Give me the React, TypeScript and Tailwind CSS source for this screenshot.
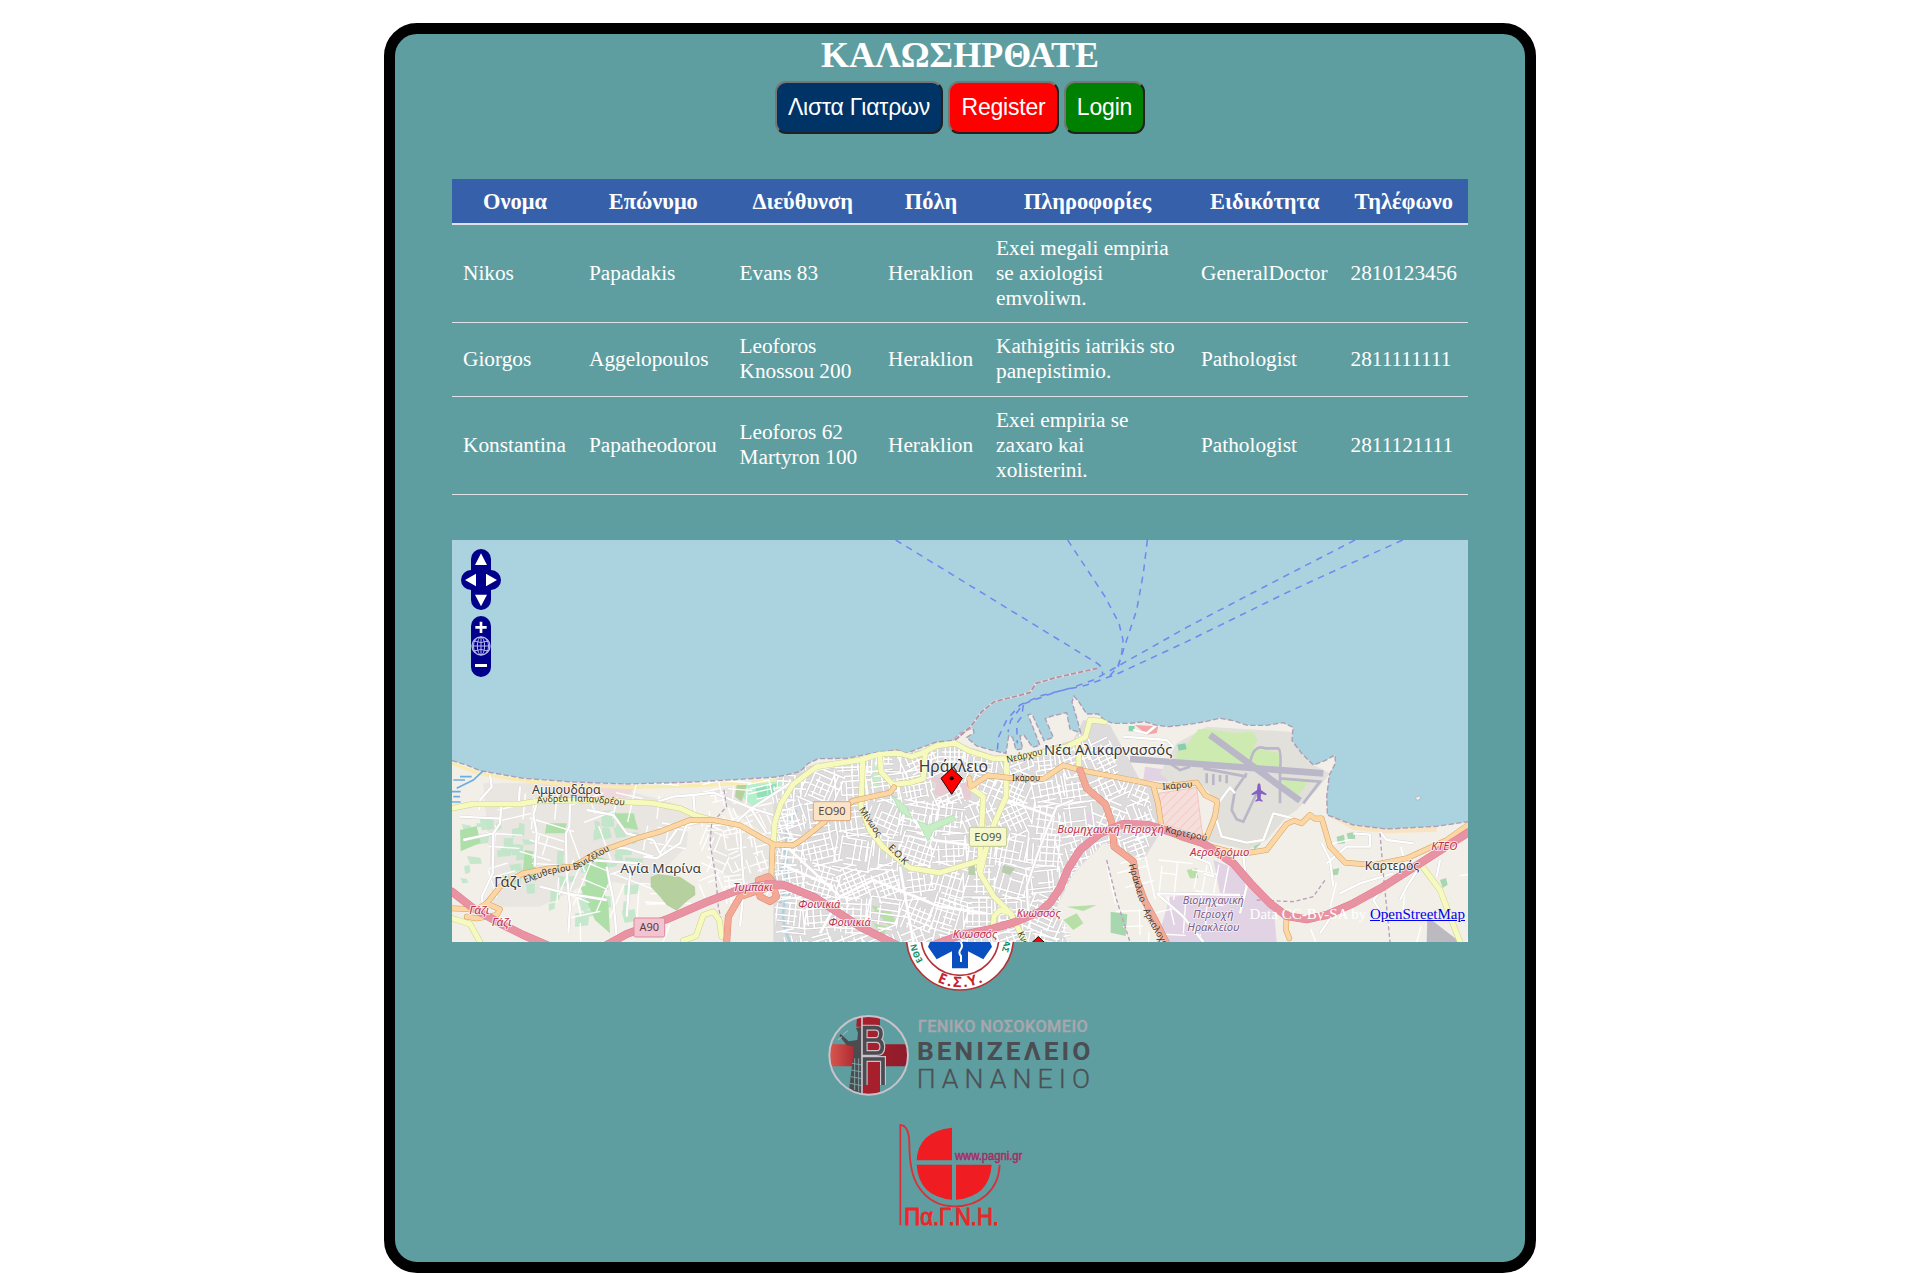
import React from "react";

const SERIF = "font-['Liberation_Serif',serif]";

const columns = [
  { label: "Ονομα", width: 126 },
  { label: "Επώνυμο", width: 150.5 },
  { label: "Διεύθυνση", width: 148.5 },
  { label: "Πόλη", width: 108 },
  { label: "Πληροφορίες", width: 205 },
  { label: "Ειδικότητα", width: 149.5 },
  { label: "Τηλέφωνο", width: 128.5 },
];

const doctors = [
  { h: "h-[98px]", cells: ["Nikos", "Papadakis", "Evans 83", "Heraklion", "Exei megali empiria se axiologisi emvoliwn.", "GeneralDoctor", "2810123456"] },
  { h: "h-[74px]", cells: ["Giorgos", "Aggelopoulos", "Leoforos Knossou 200", "Heraklion", "Kathigitis iatrikis sto panepistimio.", "Pathologist", "2811111111"] },
  { h: "h-[98px]", cells: ["Konstantina", "Papatheodorou", "Leoforos 62 Martyron 100", "Heraklion", "Exei empiria se zaxaro kai xolisterini.", "Pathologist", "2811121111"] },
];

// Deterministic generator for the small street grid.
function makeRandom(seed: number) {
  let s = seed;
  return () => {
    s = (s * 1664525 + 1013904223) % 4294967296;
    return s / 4294967296;
  };
}

function streetGrid(seed: number, x0: number, y0: number, x1: number, y1: number, cell: number, gap: number, keep: number) {
  const rnd = makeRandom(seed);
  let d = "";
  for (let cx = x0; cx < x1; cx += cell) {
    for (let cy = y0; cy < y1; cy += cell) {
      const a = (rnd() - 0.5) * 0.9;
      const ca = Math.cos(a);
      const sa = Math.sin(a);
      const half = cell * 0.56;
      const mx = cx + cell / 2;
      const my = cy + cell / 2;
      for (let o = -half; o <= half; o += gap * (0.7 + rnd() * 0.7)) {
        for (const dir of [0, 1]) {
          if (rnd() > keep) continue;
          const p = -half * (0.3 + rnd() * 0.8);
          const q = half * (0.3 + rnd() * 0.8);
          const [ax, ay, bx, by] = dir ? [o, p, o, q] : [p, o, q, o];
          d += `M${(mx + ax * ca - ay * sa).toFixed(0)} ${(my + ax * sa + ay * ca).toFixed(0)}L${(mx + bx * ca - by * sa).toFixed(0)} ${(my + bx * sa + by * ca).toFixed(0)}`;
        }
      }
    }
  }
  return d;
}

function patches(seed: number, x0: number, y0: number, x1: number, y1: number, n: number, size: number) {
  const rnd = makeRandom(seed);
  let d = "";
  for (let i = 0; i < n; i++) {
    const x = x0 + rnd() * (x1 - x0);
    const y = y0 + rnd() * (y1 - y0);
    const w = size * (0.4 + rnd());
    const h = size * (0.3 + rnd() * 0.8);
    d += `M${x.toFixed(0)} ${y.toFixed(0)}l${w.toFixed(0)} ${(rnd() * 10 - 5).toFixed(0)}l${(rnd() * 12 - 6).toFixed(0)} ${h.toFixed(0)}l${(-w * 0.9).toFixed(0)} ${(rnd() * 8).toFixed(0)}z`;
  }
  return d;
}

const COAST =
  "M36 182L80 195L120 212L250 235L400 246L560 252L740 247L900 238L1010 231L1080 215L1105 190L1135 176L1220 175L1320 155L1370 150L1400 160L1450 140L1490 126L1540 121L1560 100L1598 84L1602 98L1580 112L1610 138L1660 152L1698 160L1706 108L1718 112L1728 150L1748 146L1740 108L1752 106L1778 142L1800 136L1764 44L1776 42L1812 122L1840 112L1816 56L1836 48L1880 38L1890 88L1922 98L1912 60L1896 6L1902 -12L1918 8L1940 42L1975 42L1992 60L2019 70L2070 70L2114 65L2150 76L2185 80L2225 76L2268 70L2300 64L2339 55L2380 62L2422 76L2480 76L2529 68L2559 82L2556 122L2585 160L2620 195L2655 182L2685 165L2686 190L2668 225L2660 290L2662 345L2740 375L2840 387L2990 379L3084 365";

const YELLOW = [
  "M36 325L100 312L240 312L300 302L450 300L640 310L720 325L770 348L810 358",
  "M1000 430L1004 370L1022 312L1060 252L1130 200L1260 180L1320 162L1380 160L1415 170L1445 160L1490 137L1545 130L1585 152L1660 176L1720 176L1810 158L1880 140L1936 112L1950 60L1995 65",
  "M1915 130L1917 208",
  "M1268 186L1263 320L1290 392L1330 442L1410 504L1500 518L1620 482",
  "M1700 178L1698 290L1662 372L1640 440L1620 520L1662 590L1712 640L1742 700L1760 740",
  "M1590 262L1630 290L1624 400L1618 510",
  "M1320 172L1323 215L1358 253L1410 248L1450 236L1456 160",
  "M1712 640L1680 630L1662 650L1658 690",
  "M2940 490L3000 570L3060 726",
  "M36 655L90 672L120 726",
  "M730 722L768 708L790 645L820 635L838 660L845 710",
];

const ORANGE = [
  "M36 625L110 628L140 610L180 560L250 520L330 505L400 500L470 458L590 415L660 395L750 360L820 360L900 376L950 405L1000 433L1060 436L1090 416L1160 360L1240 302L1350 278L1362 262",
  "M140 610L180 628L170 645L110 655L80 650",
  "M998 433L994 530",
  "M1588 235L1592 260L1645 226L1720 235L1810 237L1870 196L1920 210L2000 226L2100 245L2170 260L2270 248L2296 286L2332 304L2325 350L2300 412",
  "M2140 258L2154 310L2165 385L2230 415L2320 442L2380 458L2430 458L2480 450L2540 372L2562 362L2585 370L2610 345L2625 356L2645 355L2670 440L2715 488L2800 495L2900 475L3020 420L3084 375",
  "M2540 640L2538 690L2548 715",
];

const SALMON = [
  "M1920 210L1940 265L1996 312L2016 370L2022 440L2080 484L2090 540L2115 605L2145 660L2185 740",
  "M860 726L865 650L900 590L960 570L1000 560L1010 590L990 605L960 590L955 540L985 530L1010 560",
];

const MOTORWAY = [
  "M36 575L100 625L180 670L250 705L320 735",
  "M500 735L560 702L680 658L800 606L900 568L980 553L1030 554L1120 590L1260 680L1370 735",
  "M1480 735L1560 706L1660 685L1720 668L1800 635L1830 608L1860 565L1885 505L1920 450L1980 400L2050 372L2120 374L2190 395L2290 430L2380 490L2430 548L2490 610L2540 648L2600 658L2660 645L2740 610L2830 560L2940 490L3010 445L3084 398",
];

const MINOR =
  "M150 225L155 260L120 300L118 330M184 312L180 370L160 400L158 520L125 590L130 620M290 310L280 345L290 400L284 500M390 310L388 380L378 400L380 520L390 620L385 700M440 330L520 345L560 400L640 420M650 306L700 290L760 285L820 278L900 310L935 325L1000 345M760 285L765 345M890 365L935 325L1050 250M610 470L650 475L720 430L740 375L780 365M900 376L905 470L912 560L900 680M640 420L660 460L710 390M240 260L236 310M500 500L520 600L530 710M570 520L560 650M450 480L600 490M300 560L380 580L500 600M70 420L160 400M60 350L180 356M500 440L560 445L640 470M935 330L980 400M1900 300L1850 320L1820 390L1790 470L1760 560L1765 640M2080 90L2120 100L2150 75M2050 110L2180 120L2200 140M2385 280L2370 262L2320 330L2345 410L2420 428L2470 420L2500 340L2560 355M2410 465L2420 560L2400 640M2645 430L2670 480L2680 560M2660 490L2720 440L2790 440M2740 400L2790 404L2790 440M2820 395L2840 420L2920 430M2700 580L2760 550L2860 520M2940 500L2900 560L2880 600M3000 480L2990 530M2260 470L2310 490L2320 530L2290 520M2150 580L2230 650L2290 726M2150 580L2400 585M2640 700L2680 640M2930 505L2850 540L2800 600L2850 680";

const FERRY = [
  "M1367 -480L1972 -110L1986 -98L1988 -75",
  "M1883 -480L1995 -310L2037 -230L2049 -180L2045 -140L2035 -100L2008 -72",
  "M2122 -480L2110 -380L2090 -270L2060 -180L2042 -125L2033 -100",
  "M2745 -480L2493 -350L2244 -220L2031 -100L1960 -60L1890 -35L1800 -12L1740 15L1700 60L1676 110L1672 150",
  "M2888 -480L2700 -395L2540 -322L2240 -175L2031 -78L1940 -45L1850 -25L1750 12L1712 62L1704 96",
  "M1750 15L1745 50L1730 70L1732 130",
];

const MapLabels = () => (
  <g className="font-['Noto_Sans',sans-serif]" fill="#3d3b3b" stroke="#ffffff" strokeOpacity="0.7" strokeWidth="6" strokeLinejoin="round" paintOrder="stroke">
    <text x="276" y="282" fontSize="39" textLength="206" lengthAdjust="spacingAndGlyphs">Αμμουδάρα</text>
    <text x="541" y="518" fontSize="39" textLength="242" lengthAdjust="spacingAndGlyphs">Αγία Μαρίνα</text>
    <text x="163" y="562" fontSize="43" textLength="80" lengthAdjust="spacingAndGlyphs">Γάζι</text>
    <text x="1436" y="217" fontSize="46" textLength="208" lengthAdjust="spacingAndGlyphs">Ηράκλειο</text>
    <text x="1812" y="166" fontSize="43" textLength="385" lengthAdjust="spacingAndGlyphs">Νέα Αλικαρνασσός</text>
    <text x="2774" y="510" fontSize="36" textLength="164" lengthAdjust="spacingAndGlyphs">Καρτερός</text>
    <g fontSize="28" strokeWidth="3" strokeOpacity="0.3" fill="#3b3428">
      <path id="andrea" d="M292 310Q420 296 560 318" fill="none" stroke="none" />
      <text><textPath href="#andrea" textLength="262" lengthAdjust="spacingAndGlyphs">Ανδρέα Παπανδρέου</textPath></text>
      <path id="eleftheriou" d="M255 550L330 522L410 508L512 450L530 440" fill="none" stroke="none" />
      <text><textPath href="#eleftheriou" textLength="276" lengthAdjust="spacingAndGlyphs">Ελευθερίου Βενιζέλου</textPath></text>
      <text transform="translate(1702 188) rotate(-13)" textLength="110" lengthAdjust="spacingAndGlyphs">Νεάρχου</text>
      <text x="1716" y="243" textLength="84" lengthAdjust="spacingAndGlyphs">Ικάρου</text>
      <text transform="translate(2168 270) rotate(-5)" textLength="90" lengthAdjust="spacingAndGlyphs">Ικάρου</text>
      <text transform="translate(2174 397) rotate(12)" textLength="128" lengthAdjust="spacingAndGlyphs">Καρτερού</text>
      <text transform="translate(1256 329) rotate(56)" textLength="100" lengthAdjust="spacingAndGlyphs">Μίνωος</text>
      <text transform="translate(1343 444) rotate(46)" textLength="72" lengthAdjust="spacingAndGlyphs">Ε.Ο.Κ</text>
      <text transform="translate(1732 700) rotate(66)" textLength="94" lengthAdjust="spacingAndGlyphs">Κνωσού</text>
      <path id="arkalochori" d="M2066 494L2094 590L2120 655L2170 740L2200 790" fill="none" stroke="none" />
      <text><textPath href="#arkalochori" textLength="300" lengthAdjust="spacingAndGlyphs">Ηράκλειο - Αρκαλοχώρι</textPath></text>
    </g>
    <g fontSize="32" fontStyle="italic" fill="#c0304e" strokeWidth="6">
      <text x="88" y="641" textLength="60" lengthAdjust="spacingAndGlyphs">Γάζι</text>
      <text x="155" y="677" textLength="60" lengthAdjust="spacingAndGlyphs">Γάζι</text>
      <text x="880" y="574" textLength="118" lengthAdjust="spacingAndGlyphs">Τυμπάκι</text>
      <text x="1074" y="624" textLength="127" lengthAdjust="spacingAndGlyphs">Φοινικιά</text>
      <text x="1165" y="679" textLength="127" lengthAdjust="spacingAndGlyphs">Φοινικιά</text>
      <text x="1730" y="651" textLength="132" lengthAdjust="spacingAndGlyphs">Κνωσσός</text>
      <text x="1538" y="715" textLength="134" lengthAdjust="spacingAndGlyphs">Κνωσσός</text>
      <text x="1852" y="398" textLength="320" lengthAdjust="spacingAndGlyphs">Βιομηχανική Περιοχή</text>
      <text x="2250" y="467" textLength="178" lengthAdjust="spacingAndGlyphs">Αεροδρόμιο</text>
      <text x="2974" y="450" textLength="78" lengthAdjust="spacingAndGlyphs">ΚΤΕΟ</text>
    </g>
    <g fontSize="32" fontStyle="italic" fill="#79608a" strokeWidth="5" textAnchor="middle">
      <text x="2320" y="612" textLength="184" lengthAdjust="spacingAndGlyphs">Βιομηχανική</text>
      <text x="2320" y="653" textLength="122" lengthAdjust="spacingAndGlyphs">Περιοχή</text>
      <text x="2320" y="693" textLength="156" lengthAdjust="spacingAndGlyphs">Ηρακλείου</text>
    </g>
  </g>
);

const Shield = ({ x, y, w, label, fill, stroke, color }: { x: number; y: number; w: number; label: string; fill: string; stroke: string; color: string }) => (
  <g className="font-['Noto_Sans',sans-serif]">
    <rect x={x} y={y} width={w} height="57" rx="5" fill={fill} stroke={stroke} strokeWidth="3" />
    <text x={x + w / 2} y={y + 40} fontSize="33" textAnchor="middle" fill={color}>{label}</text>
  </g>
);

const Marker = ({ x, y }: { x: number; y: number }) => (
  <g transform={`translate(${x} ${y})`}>
    <path d="M0 -78L32 -48L0 0L-32 -48Z" fill="#ff0000" stroke="#200000" strokeWidth="3" />
    <circle cx="0" cy="-48" r="6" fill="#000" />
  </g>
);

const PanZoom = () => (
  <g>
    <g fill="#00008b">
      <rect x="93" y="-453" width="60" height="183" rx="30" />
      <rect x="63" y="-390" width="120" height="60" rx="30" />
      <rect x="93" y="-252" width="60" height="183" rx="30" />
    </g>
    <path fill="#fff" d="M123 -440L141 -405H105ZM123 -281L141 -316H105ZM75 -360L108 -379V-341ZM171 -360L138 -379V-341ZM119 -235h8v13h13v8h-13v13h-8v-13h-13v-8h13zM105 -108h36v9h-36z" />
    <g fill="none" stroke="#b8b8ef" strokeWidth="3">
      <circle cx="123" cy="-162" r="27" strokeWidth="4" />
      <ellipse cx="123" cy="-162" rx="11" ry="27" />
      <path d="M123 -189V-135M97 -162H149M101 -177Q123 -168 145 -177M101 -147Q123 -156 145 -147M108 -183Q92 -162 108 -141M138 -183Q154 -162 138 -141" />
    </g>
  </g>
);

const Roads = ({ paths, casing, color, width }: { paths: string[]; casing: string; color: string; width: number }) => (
  <g fill="none" strokeLinejoin="round" strokeLinecap="round">
    {paths.map((d) => <path key={d} d={d} stroke={casing} strokeWidth={width + 3} />)}
    {paths.map((d) => <path key={d} d={d} stroke={color} strokeWidth={width} />)}
  </g>
);

const CityMap = () => (
  <svg className="block h-full w-full" viewBox="36 -480 3048 1206" role="img" aria-label="Ηράκλειο">
    <defs>
      <clipPath id="land"><path d={COAST + "V726H36Z"} /></clipPath>
      <clipPath id="city"><path d="M1010 240L1130 190L1260 180L1450 150L1540 125L1660 165L1720 170L1900 130L1930 70L2000 75L2040 230L2120 262L2150 380L2110 480L2060 460L1990 430L1900 520L1850 620L1900 726H1010L1000 560L1010 440Z" /></clipPath>
      <pattern id="hatch" width="20" height="20" patternUnits="userSpaceOnUse" patternTransform="rotate(45)">
        <rect width="20" height="20" fill="#f6dedb" />
        <path d="M0 0V20" stroke="#f1b9b5" strokeWidth="3" />
      </pattern>
    </defs>
    <rect x="36" y="-480" width="3048" height="1206" fill="#aad3df" />
    <path d={COAST + "V726H36Z"} fill="#f2efe9" />
    <g clipPath="url(#land)">
      <path fill="#e9e6e2" d="M130 250H480L700 310L880 380L1000 440V560L880 540L800 480L640 560L460 540L300 620H160ZM820 270L1010 240V430L900 350Z" />
      <path fill="#f2efe9" d="M36 470L150 440V600H36ZM745 380L800 370L830 520L770 600L700 640L620 560L740 440Z" />
      <path fill="#f0d9dc" d="M310 245L590 256L560 295L440 290L320 285Z" />
      <path fill="#dddbdb" d="M1000 240L1130 190L1260 175L1450 150L1540 125L1660 165L1720 170L1900 120L1930 60L2010 75L2100 240L2150 270L2160 400L2110 480L2060 460L1990 430L1900 520L1850 620L1880 726H1000Z" />
      <path fill="#b5e6c2" opacity=".75" d={patches(9, 60, 350, 260, 560, 22, 34) + patches(13, 300, 440, 560, 640, 26, 40) + patches(5, 420, 330, 700, 400, 12, 34)} />
      <path fill="#aedfa9" d="M60 390l50-12 12 50-60 26zM470 470l30 8 5 90-40 10zM420 560l60-10 25 60 5 90-45-40zM440 490l40 20-10 70-35-10zM255 450l30 5 3 90-40-30zM320 370l60 0-5 30-60 0zM520 340l60 0 15 50-50-8z" />
      <path fill="#b5f0cc" d="M920 250L1035 238L1000 290L940 320L905 290Z" />
      <path fill="#92dfb8" d="M945 260l35-6 2 35-28 8zM985 255l30-5-10 30-20 5z" />
      <path fill="#b6d0a0" d="M890 255L920 255L905 305L885 290Z" />
      <path fill="#c8eec5" d="M1300 180L1325 230L1310 270L1290 250ZM1065 235L1095 230L1095 252L1070 255Z" />
      <path fill="#b7dfa7" d="M1290 615l60 15 15 30-15 20zM1300 670l40 10-10 35zM1910 640l-40 20 30 30 30-20zM1880 620l90-5-40 18zM2240 510l30-5 5 30-25 0z" />
      <path fill="#a7d7af" d="M2012 635l50 8-5 65-45-10zM2690 410l22-6 3 26-22 2zM2720 400l24-4 2 20-22 2zM2670 510l28-6-4 20-22 2zM3000 540l18-6 5 20-15 10zM2438 435l28-30-4 26-18 18z" />
      <path fill="#e1d3e3" d="M2115 200L2185 210V245L2110 240ZM2320 480L2420 520L2500 610L2510 726H2150L2190 590L2340 580ZM1940 340l20-5 8 30-30 10z" />
      <path fill="#fbe0b0" opacity=".7" d="M2660 345L2740 375L2840 387L2990 379L2990 395L2840 400L2740 390Z" />
      <path fill="#e2e0da" d="M2300 80L2559 96L2620 195L2670 220L2630 270L2570 330L2540 350L2480 420L2420 450L2290 420L2330 300L2280 250L2190 245L2160 220L2210 130Z" />
      <path fill="#cdebb0" d="M2295 86L2380 98L2440 96L2452 120L2440 145L2475 150L2520 160L2518 205L2440 200L2210 180L2210 155L2245 130L2275 88ZM2520 235L2610 240L2575 285L2545 270Z" />
      <g stroke="#bab7c9" fill="none">
        <path strokeWidth="20" d="M2070 177L2650 220" />
        <path strokeWidth="20" d="M2310 105L2580 302" />
        <path strokeWidth="8" d="M2430 190Q2440 130 2475 145H2515Q2525 150 2520 220V310M2190 190L2220 210L2250 200M2300 220L2300 250M2320 222V255M2340 225V245M2360 225V250M2420 220L2385 270L2375 330L2390 358L2410 365L2450 280M2290 205L2420 230M2520 235L2640 245L2590 310" />
      </g>
      <path fill="url(#hatch)" stroke="#efb6b0" strokeWidth="2" d="M2156 280L2270 262L2285 385L2290 410L2170 372Z" />
      <path fill="#a6a3ae" opacity=".7" d="M2962 650L3060 726H2960Z" />
      <path fill="#f6a4a8" d="M2085 75l70 4-5 20-30 5z" />
      <path fill="#88cfb0" d="M2066 78l18 0 0 16-18 0zM2212 134l24-4 4 18-24 4z" />
      <path d="M36 190L120 222L250 242L400 256L560 262L740 258L900 250L1010 240" stroke="#f9ecb0" strokeWidth="10" fill="none" />
      <path d="M990 560Q1050 480 1040 430T1070 330M1070 550Q1000 620 1050 726M1030 440Q1060 520 1020 610" fill="none" stroke="#aad3df" strokeWidth="8" />
      <path d="M130 212L100 240L50 265M40 240H75M60 230H95M36 275H62M40 290H60M36 306H62" fill="none" stroke="#6daee0" strokeWidth="5" />
      <g clipPath="url(#city)" fill="none">
        <path d={streetGrid(41, 1000, 120, 2200, 726, 96, 17, 0.92)} stroke="#c4c1c1" strokeWidth="7" />
        <path d={streetGrid(41, 1000, 120, 2200, 726, 96, 17, 0.92)} stroke="#ffffff" strokeWidth="5.2" />
      </g>
      <g fill="none" stroke="#ffffff">
        <path d={streetGrid(17, 140, 260, 700, 560, 120, 34, 0.3)} strokeWidth="4" />
        <path d={streetGrid(23, 790, 250, 1010, 540, 70, 18, 0.55)} strokeWidth="4" />
        <path d={streetGrid(77, 380, 560, 700, 726, 110, 40, 0.25)} strokeWidth="4" />
        <path d={streetGrid(31, 2020, 490, 2330, 726, 110, 36, 0.4)} strokeWidth="4" />
        <path d={streetGrid(37, 2640, 400, 3060, 700, 130, 46, 0.1)} strokeWidth="4" />
        <path d={MINOR} stroke="#d4cfcf" strokeWidth="9" strokeLinejoin="round" />
        <path d={MINOR} strokeWidth="7" strokeLinejoin="round" />
        <path d="M1040 440L1200 590L1300 540L1500 620L1640 640M1200 590L1140 700M1040 500L1180 560M1380 500L1420 726M1360 300L1480 420L1620 440M1700 300L1840 350" strokeWidth="8" />
      </g>
      <path fill="#b6d0a0" d="M632 530L655 522L720 530L765 560L766 585L745 600L710 632L680 615L660 590L632 560Z" />
      <path fill="#c8eec5" stroke="#a5dcae" strokeWidth="2" d="M1355 285L1400 320L1418 358L1380 335ZM1432 362L1465 375L1540 345L1548 360L1480 392L1464 424Z" />
      <path fill="#b9ccab" d="M1585 490h20v35h-20zM1690 495l35 10-15 20-25-8z" />
      <path fill="#e8ccd4" d="M1465 235L1530 225L1545 270L1500 290L1480 280L1490 250ZM1560 250l30-5 3 50-20 5z" />
      <path d="M852 270L860 320L815 370L810 430L826 520L835 620L850 690M2000 480L2030 600L2070 726M2820 400L2830 520L2850 726M2450 600L2560 605L2620 590L2655 540" fill="none" stroke="#b79fbd" strokeWidth="4" strokeDasharray="12 8" />
    </g>
    <path d={COAST} fill="none" stroke="#a58ba8" strokeWidth="4" strokeDasharray="16 7" opacity=".8" />
    <path d="M1545 120L1592 80L1625 35L1663 5L1770 -22L1788 -50L1850 -68L1972 -95" fill="none" stroke="#e6dbe0" strokeWidth="7" />
    <path d="M1545 120L1592 80L1625 35L1663 5L1770 -22L1788 -50L1850 -68L1972 -95" fill="none" stroke="#b08f9f" strokeWidth="5" strokeDasharray="16 6" />
    <path d="M2925 295l12-8 6 8-10 6z" fill="#f2efe9" stroke="#a7a7c0" strokeWidth="2" />
    <g fill="none" stroke="#7387ef" strokeWidth="4.6" strokeDasharray="20 17">
      {FERRY.map((d) => <path key={d} d={d} />)}
    </g>
    <g clipPath="url(#land)">
      <Roads paths={YELLOW} casing="#cfd189" color="#f7fabf" width={15} />
      <Roads paths={ORANGE} casing="#d2a25a" color="#fcd6a4" width={14} />
      <Roads paths={SALMON} casing="#d98873" color="#f4a996" width={18} />
      <Roads paths={MOTORWAY} casing="#e07c98" color="#e892a2" width={21} />
    </g>
    <path d="M2457 250q4 0 5 10l1 10 16 11v5l-16-5-1 15 6 6v3l-11-3-11 3v-3l6-6-1-15-16 5v-5l16-11 1-10q1-10 5-10z" fill="#8461c4" />
    <MapLabels />
    <Shield x={582} y={654} w={92} label="A90" fill="#f3c4cf" stroke="#dc8ba0" color="#5c3a42" />
    <Shield x={1120} y={305} w={112} label="EO90" fill="#fbe3c8" stroke="#d9a77a" color="#5b4a38" />
    <Shield x={1588} y={382} w={112} label="EO99" fill="#f5f7cd" stroke="#bfc98a" color="#52563b" />
    <Marker x={1535} y={283} />
    <Marker x={1795} y={788} />
    <PanZoom />
  </svg>
);

const EsyLogo = () => (
  <svg className="block h-[55px] w-[110px]" viewBox="375 36 330 165" aria-label="Ε.Σ.Υ.">
    <defs>
      <path id="esyBottom" d="M413 103A152 152 0 0 0 667 103" />
      <path id="esyLeft" d="M429 92A133 133 0 0 1 407 19" />
      <path id="esyRight" d="M672 6A133 133 0 0 1 654 88" />
    </defs>
    <circle cx="540" cy="19" r="161" fill="#fff" stroke="#b5343a" strokeWidth="5" />
    <circle cx="540" cy="19" r="117" fill="#fff" stroke="#b5343a" strokeWidth="5" />
    <path fill="#0a4fc0" d="M444 50L450 36H630L636 50L610 88L564 64V115H516V64L470 88Z" />
    <path d="M542 36Q550 48 542 58T543 78V96" fill="none" stroke="#fff" strokeWidth="6" />
    <g className="font-['Noto_Sans',sans-serif]" fontWeight="bold">
      <text fontSize="43" fill="#c5222b" textAnchor="middle"><textPath href="#esyBottom" startOffset="50%" textLength="142">Ε.Σ.Υ.</textPath></text>
      <g fontSize="26" fill="#0f8f6c">
        <text><textPath href="#esyLeft">ΕΘΝ</textPath></text>
        <text><textPath href="#esyRight">ΕΙΑΣ</textPath></text>
      </g>
    </g>
  </svg>
);

const VenizeleioLogo = () => (
  <svg className="block h-[113px] w-[320px]" viewBox="60 201 960 339" aria-label="Βενιζέλειο Πανάνειο">
    <defs>
      <linearGradient id="crossRed" x1="0" x2="1">
        <stop offset="0" stopColor="#d8584f" />
        <stop offset=".4" stopColor="#a51f2c" />
        <stop offset="1" stopColor="#8e1c2b" />
      </linearGradient>
      <clipPath id="disc"><circle cx="266" cy="376" r="118" /></clipPath>
    </defs>
    <g clipPath="url(#disc)">
      <path fill="url(#crossRed)" d="M148 343H384V409H148Z" />
      <path fill="#a51f2c" d="M246 258H300V495H246Z" />
      <path fill="#a51f2c" d="M231 262H246V290H229Z" />
      <path fill="#4b4b50" d="M246 290L228 294L234 308L232 330L206 334L182 312L178 317L200 346L222 350L220 376L207 480L246 492Z" />
      <path d="M216 400l30 5M214 420l32 6M212 440l34 6M210 460l36 7M224 385v95M236 385v100" stroke="#7da5a5" strokeWidth="3" />
      <path d="M188 314l16-12M174 330l12-10" stroke="#b9b4bd" strokeWidth="3" />
      <path d="M246 258V495" stroke="#c9c2ca" strokeWidth="5" />
    </g>
    <circle cx="266" cy="376" r="118" fill="none" stroke="#c9c2ca" strokeWidth="6" />
    <g fill="none" strokeLinejoin="miter">
      <path d="M254 293V369H290Q307 369 307 350Q307 333 292 330Q303 325 303 311Q303 293 286 293ZM254 330H292M254 465V387H309V465" stroke="#c9c2ca" strokeWidth="18" />
      <path d="M254 293V369H290Q307 369 307 350Q307 333 292 330Q303 325 303 311Q303 293 286 293ZM254 330H292M254 465V387H309V465" stroke="#4b4b50" strokeWidth="11" />
    </g>
    <g className="font-['Roboto',sans-serif]">
      <text x="413" y="305" fontSize="49" fontWeight="500" fill="#a9a7ae" stroke="#a9a7ae" strokeWidth="1" textLength="510">ΓΕΝΙΚΟ ΝΟΣΟΚΟΜΕΙΟ</text>
      <text x="411" y="391" fontSize="79" fontWeight="700" fill="#4b4d52" textLength="520">ΒΕΝΙΖΕΛΕΙΟ</text>
      <text x="410" y="475" fontSize="80" fontWeight="300" fill="#4b5155" stroke="#4b5155" strokeWidth="1" textLength="520">ΠΑΝΑΝΕΙΟ</text>
    </g>
  </svg>
);

const PagniLogo = () => (
  <svg className="block h-[120px] w-[140px]" viewBox="330 540 420 360" aria-label="Πα.Γ.Ν.Η.">
    <path fill="#ef1c22" d="M516 593V691H410Q414 604 516 593ZM410 704H516V809Q416 800 410 704ZM528 704H635Q629 800 528 809Z" />
    <path d="M361 886V585Q387 586 388 640C388 700 396 740 414 768C438 806 476 829 524 829C600 829 656 780 659 704" fill="none" stroke="#dc3038" strokeWidth="5.5" />
    <g className="font-['Liberation_Sans',sans-serif]">
      <text x="525" y="689" fontSize="38" fill="#a82c64" stroke="#a82c64" strokeWidth="1.5" textLength="202" lengthAdjust="spacingAndGlyphs">www.pagni.gr</text>
      <text x="373" y="885" fontSize="70" fill="#ee2429" stroke="#ee2429" strokeWidth="3" textLength="284" lengthAdjust="spacingAndGlyphs">Πα.Γ.Ν.Η.</text>
    </g>
  </svg>
);

const buttonBase =
  "h-[53px] rounded-[11px] border-2 border-t-[#767676] border-l-[#767676] border-r-[#212121] border-b-[#212121] text-center text-[23px] leading-none tracking-[-0.2px] text-white font-['Liberation_Sans',sans-serif]";

export default function App() {
  return (
    <div className={`min-h-[1273px] bg-white pt-[23px] text-white ${SERIF}`}>
      <main className="mx-auto flex h-[1250px] w-[1152px] flex-col items-center rounded-[33px] border-[11px] border-black bg-[#5f9ea0]">
        <h1 className="h-[43px] text-[36px] leading-[42px] font-bold">ΚΑΛΩΣΗΡΘΑΤΕ</h1>
        <div className="mt-1 flex gap-[5px]">
          <button className={`${buttonBase} w-[168px] bg-[#003366]`}>Λιστα Γιατρων</button>
          <button className={`${buttonBase} w-[111px] bg-[#ff0000]`}>Register</button>
          <button className={`${buttonBase} w-[81px] bg-[#008000]`}>Login</button>
        </div>

        <table className="mt-[45px] w-[1016px] table-fixed border-collapse text-[21.3px] leading-[25px]">
          <colgroup>
            {columns.map((c) => <col key={c.label} style={{ width: c.width }} />)}
          </colgroup>
          <thead>
            <tr className="h-[45px] border-b-2 border-[#dee2e6] bg-[#3661aa] text-[22.4px]">
              {columns.map((c) => <th key={c.label} className="p-0 text-center align-middle font-bold">{c.label}</th>)}
            </tr>
          </thead>
          <tbody>
            {doctors.map((d) => (
              <tr key={d.cells[0]} className={`${d.h} border-b border-[#dee2e6]`}>
                {d.cells.map((cell, i) => <td key={i} className="px-[11px] py-0 align-middle">{cell}</td>)}
              </tr>
            ))}
          </tbody>
        </table>

        <section className="relative mt-[45px] h-[402px] w-[1016px] shrink-0 overflow-hidden">
          <CityMap />
          <p className="absolute right-[3px] bottom-[19px] text-[15px] leading-[17px] whitespace-nowrap">
            Data CC-By-SA by <a className="text-[#0000ee] underline" href="#map">OpenStreetMap</a>
          </p>
        </section>

        <EsyLogo />
        <VenizeleioLogo />
        <PagniLogo />
      </main>
    </div>
  );
}
